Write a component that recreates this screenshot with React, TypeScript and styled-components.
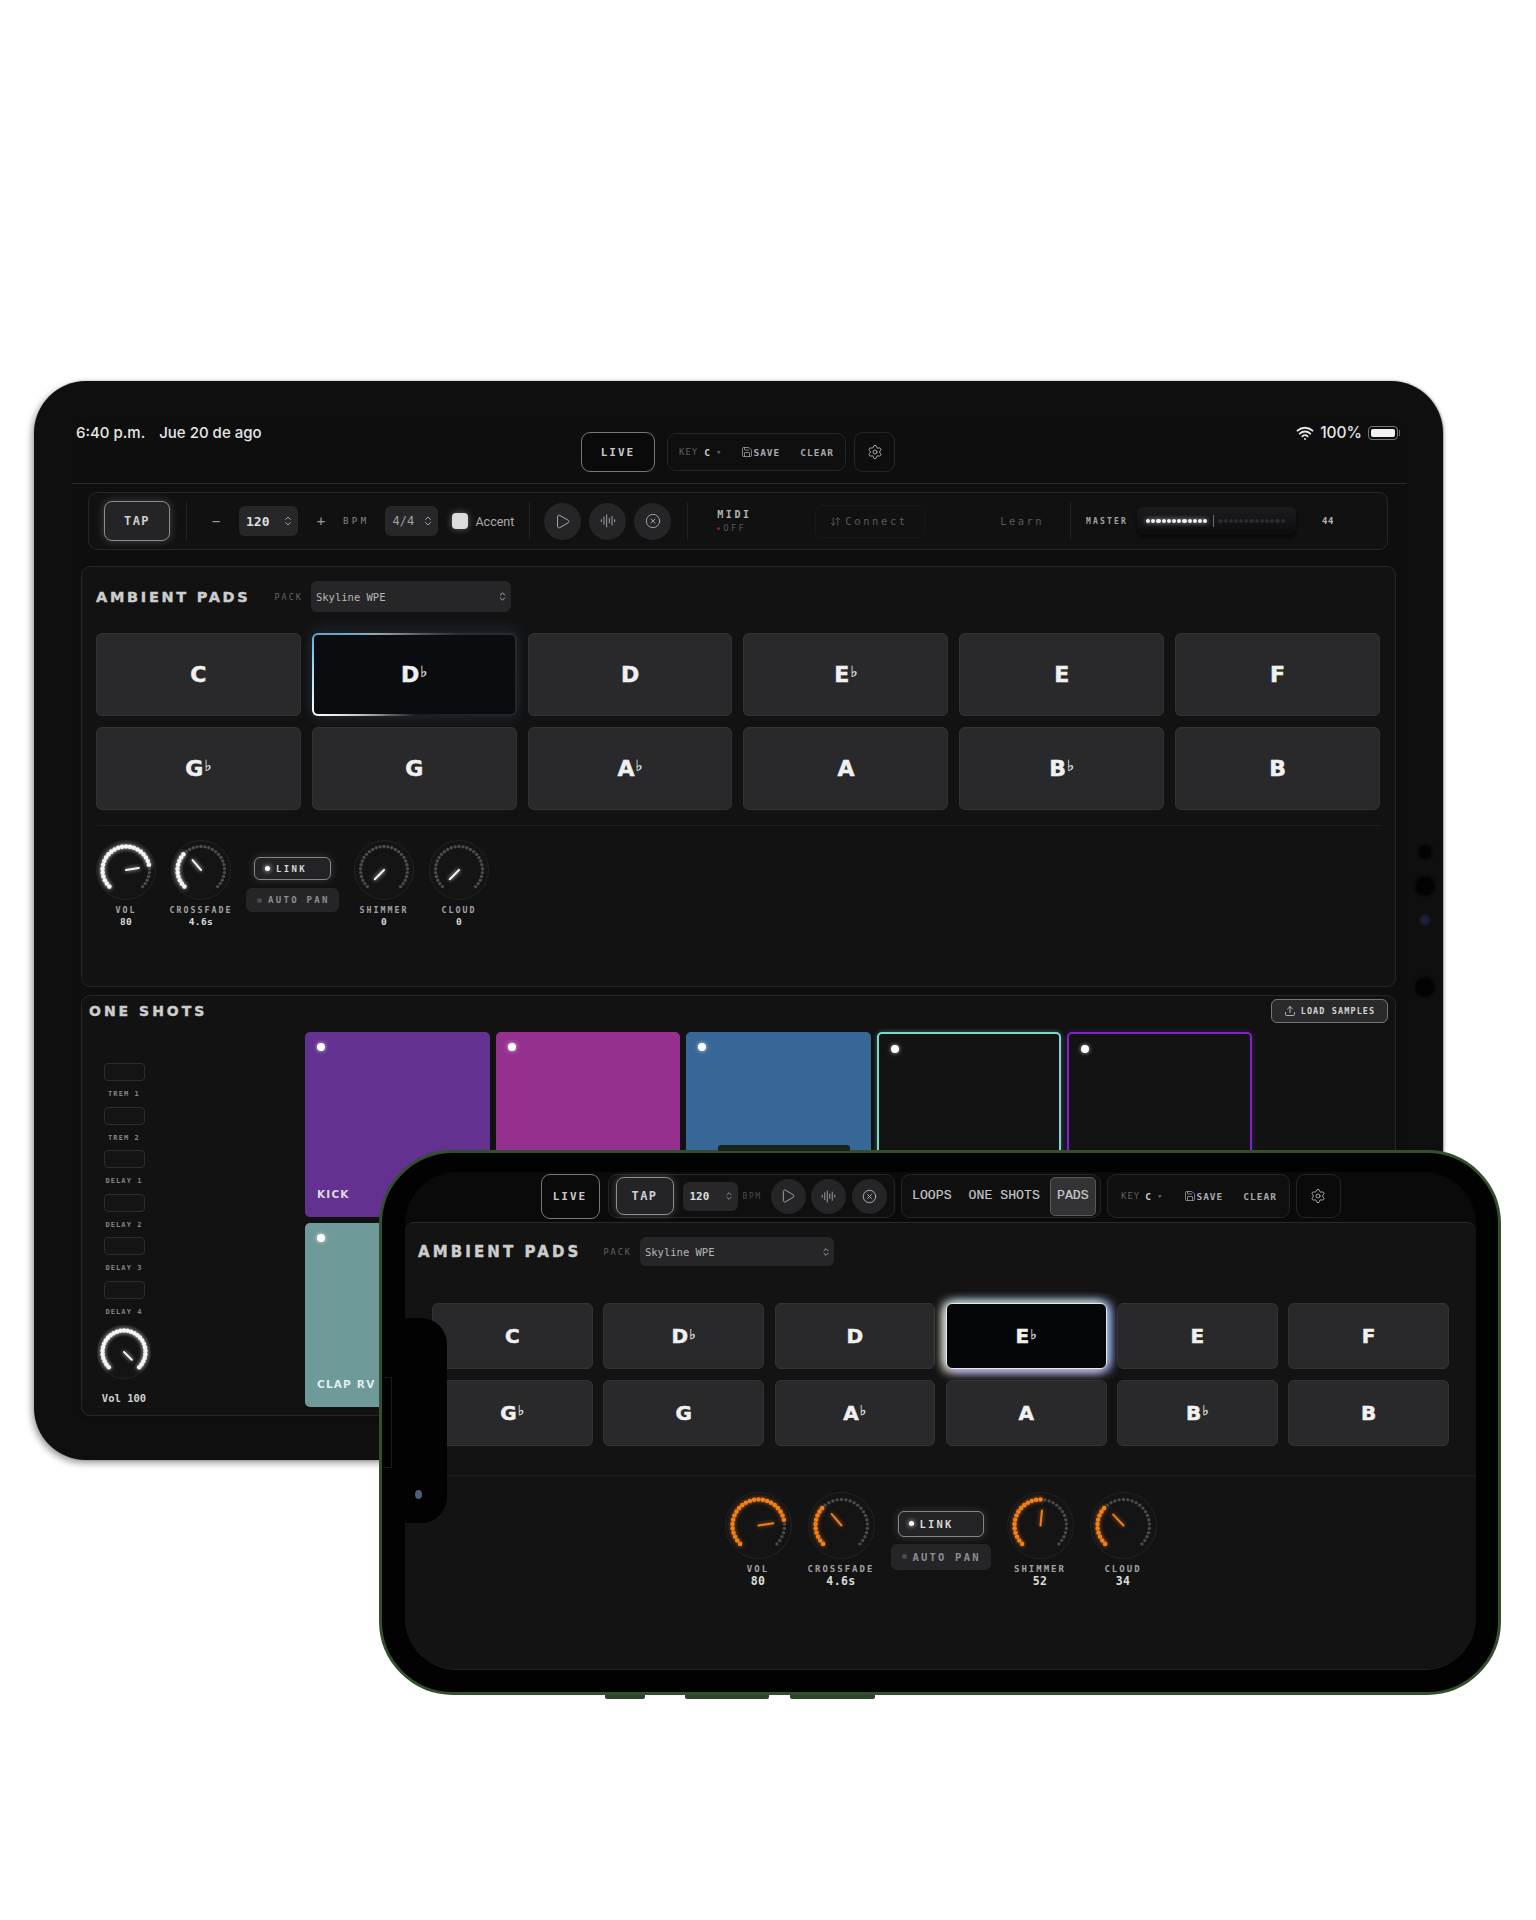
import React from 'react';
import styled, { createGlobalStyle, css } from 'styled-components';
import {
  Play,
  AudioLines,
  CircleX,
  Settings,
  Save,
  ChevronsUpDown,
  Upload,
  ArrowDownUp,
  Wifi,
} from 'lucide-react';

const MONO = `'DejaVu Sans Mono', 'Liberation Mono', monospace`;
const HEAVY = `'DejaVu Sans', 'Liberation Sans', sans-serif`;

const GlobalStyle = createGlobalStyle`
  html, body {
    margin: 0;
    padding: 0;
    background: #fff;
  }
  * {
    box-sizing: border-box;
  }
`;

const inset = css<{ $ml?: number }>`
  margin-left: ${(p) => p.$ml ?? 0}px;
  flex: none;
`;

const Canvas = styled.div`
  position: relative;
  width: 1536px;
  height: 1920px;
  overflow: hidden;
  background: #fff;
`;

/* ---------- devices ---------- */

const Tablet = styled.div`
  position: absolute;
  left: 34px;
  top: 381px;
  width: 1409px;
  height: 1079px;
  padding: 37px 36px 37px 38px;
  border-radius: 52px;
  background: #0f0f10;
  box-shadow: -2px 3px 7px rgba(0, 0, 0, 0.4), 1px 0 2px rgba(0, 0, 0, 0.3);
`;

const TabletScreen = styled.div`
  height: 100%;
  border-radius: 22px 22px 26px 26px;
  background: #0e0e0f;
  display: flex;
  flex-direction: column;
`;

const Sensor = styled.span<{ $top: number; $size: number; $blue?: boolean }>`
  position: absolute;
  right: ${(p) => 18 - p.$size / 2}px;
  top: ${(p) => p.$top}px;
  width: ${(p) => p.$size}px;
  height: ${(p) => p.$size}px;
  border-radius: 50%;
  background: ${(p) => (p.$blue ? '#1c2238' : '#030303')};
  filter: blur(1px);
`;

const Phone = styled.div`
  position: absolute;
  left: 379px;
  top: 1150px;
  width: 1122px;
  height: 545px;
  padding: 19px 22px 22px 23px;
  border: 3.5px solid #344f2e;
  border-radius: 74px;
  background: #020202;
`;

const PhoneScreen = styled.div`
  height: 100%;
  border-radius: 52px;
  overflow: hidden;
  background: #0a0a0b;
  border-bottom: 1px solid #232324;
  display: flex;
  flex-direction: column;
`;

const Notch = styled.div`
  position: absolute;
  left: 0;
  top: 165px;
  width: 65px;
  height: 205px;
  border-radius: 0 26px 26px 0;
  background: #020202;
`;

const CameraDot = styled.span`
  position: absolute;
  left: 33px;
  top: 337px;
  width: 7px;
  height: 9px;
  border-radius: 50%;
  background: #4d5f70;
`;

const SideButtonOutline = styled.span`
  position: absolute;
  left: 2px;
  top: 224px;
  width: 8px;
  height: 91px;
  border: 1px solid #1c1c1c;
  border-left: none;
`;

const PowerButton = styled.span`
  position: absolute;
  left: 336px;
  top: -8px;
  width: 132px;
  height: 6px;
  border-radius: 3px 3px 0 0;
  background: #16241a;
`;

const BottomButton = styled.span<{ $left: number; $width: number }>`
  position: absolute;
  left: ${(p) => p.$left}px;
  bottom: -7px;
  width: ${(p) => p.$width}px;
  height: 4px;
  border-radius: 0 0 2px 2px;
  background: #2c4429;
`;

/* ---------- tablet header ---------- */

const StatusHeader = styled.div`
  display: grid;
  grid-template-columns: 509px auto 1fr;
  height: 66px;
  padding-top: 6px;
  border-bottom: 1px solid #2c2c2d;
`;

const StatusLeft = styled.div`
  display: flex;
  gap: 14px;
  padding-left: 4px;
  font: 500 15px/18px Inter, 'Liberation Sans', sans-serif;
  color: #e6e6e6;
`;

const StatusRight = styled.div`
  display: flex;
  justify-content: flex-end;
  align-items: center;
  gap: 6px;
  height: 18px;
  padding-right: 9px;
  font: 500 15.5px/18px Inter, 'Liberation Sans', sans-serif;
  color: #e6e6e6;
`;

const Battery = styled.span`
  display: inline-block;
  position: relative;
  width: 30px;
  height: 14px;
  padding: 2px;
  border: 1px solid #777;
  border-radius: 4px;
  &::before {
    content: '';
    display: block;
    height: 100%;
    border-radius: 2px;
    background: #f2f2f2;
  }
  &::after {
    content: '';
    position: absolute;
    right: -3px;
    top: 3px;
    width: 1.5px;
    height: 6px;
    background: #666;
  }
`;

const HeaderTools = styled.div`
  display: flex;
  align-items: center;
  height: 40px;
  margin-top: 8px;
`;

const LiveButton = styled.div<{ $w: number; $h: number; $ml?: number }>`
  ${inset};
  width: ${(p) => p.$w}px;
  height: ${(p) => p.$h}px;
  display: flex;
  align-items: center;
  justify-content: center;
  border: 1.5px solid #77777a;
  border-radius: 9px;
  background: #0a0a0b;
  font: 700 11px ${MONO};
  letter-spacing: 2px;
  color: #c9c9c9;
`;

const ToolGroup = styled.div<{ $w: number; $h: number; $ml?: number; $pad?: number }>`
  ${inset};
  width: ${(p) => p.$w}px;
  height: ${(p) => p.$h}px;
  padding-left: ${(p) => p.$pad ?? 0}px;
  display: flex;
  align-items: center;
  border: 1px solid #252527;
  border-radius: 9px;
  background: #0f0f10;
`;

const KeyLabel = styled.span<{ $ml?: number }>`
  ${inset};
  font: 400 9px ${MONO};
  letter-spacing: 1px;
  color: #5f5f62;
`;

const KeyValue = styled.span<{ $ml?: number }>`
  ${inset};
  font: 700 9.5px ${MONO};
  color: #cfcfcf;
`;

const ToolAction = styled.span<{ $ml?: number }>`
  ${inset};
  display: inline-flex;
  align-items: center;
  font: 700 9.5px ${MONO};
  letter-spacing: 1px;
  color: #a9a9ab;
`;

const GearButton = styled.div<{ $w: number; $h: number; $ml?: number }>`
  ${inset};
  width: ${(p) => p.$w}px;
  height: ${(p) => p.$h}px;
  display: flex;
  align-items: center;
  justify-content: center;
  border: 1px solid #252527;
  border-radius: 9px;
  color: #a8a8a8;
`;

/* ---------- transport toolbar ---------- */

const Toolbar = styled.div`
  display: flex;
  align-items: center;
  height: 58px;
  margin: 8px 19px 0 16px;
  padding-left: 15px;
  border: 1px solid #262628;
  border-radius: 9px;
  background: #111112;
`;

const TapButton = styled.div<{ $w: number; $h: number; $ml?: number }>`
  ${inset};
  width: ${(p) => p.$w}px;
  height: ${(p) => p.$h}px;
  display: flex;
  align-items: center;
  justify-content: center;
  border: 1.5px solid #8c8c8e;
  border-radius: 8px;
  background: #242426;
  box-shadow: 0 0 8px rgba(255, 255, 255, 0.22);
  font: 700 12px ${MONO};
  letter-spacing: 1.4px;
  color: #d0d0d0;
`;

const VRule = styled.span<{ $ml?: number }>`
  ${inset};
  width: 1px;
  height: 38px;
  background: #202022;
`;

const StepSign = styled.span<{ $ml?: number }>`
  ${inset};
  width: 12px;
  text-align: center;
  font: 400 14px ${MONO};
  color: #9c9c9c;
`;

const ValueBox = styled.div<{ $w: number; $h: number; $ml?: number; $bold?: boolean; $size?: number }>`
  ${inset};
  width: ${(p) => p.$w}px;
  height: ${(p) => p.$h}px;
  padding: 0 4px 0 7px;
  display: flex;
  align-items: center;
  justify-content: space-between;
  border-radius: 6px;
  background: #272729;
  font: ${(p) => (p.$bold ? 700 : 400)} ${(p) => p.$size ?? 12}px ${MONO};
  color: ${(p) => (p.$bold ? '#dedede' : '#a0a0a0')};
  svg {
    flex: none;
    color: #a0a0a0;
  }
`;

const BpmLabel = styled.span<{ $ml?: number; $dim?: boolean; $ls: number; $size: number }>`
  ${inset};
  font: 400 ${(p) => p.$size}px ${MONO};
  letter-spacing: ${(p) => p.$ls}px;
  color: ${(p) => (p.$dim ? '#4a4a4c' : '#858587')};
`;

const AccentBox = styled.span<{ $ml?: number }>`
  ${inset};
  width: 16px;
  height: 16px;
  border-radius: 4px;
  background: #dcdcdc;
  box-shadow: 0 0 7px rgba(255, 255, 255, 0.35);
`;

const AccentLabel = styled.span<{ $ml?: number }>`
  ${inset};
  font: 400 12.5px Roboto, 'Liberation Sans', sans-serif;
  color: #ababab;
`;

const RoundRow = styled.div<{ $gap: number; $ml?: number }>`
  ${inset};
  display: flex;
  gap: ${(p) => p.$gap}px;
`;

const RoundButton = styled.div<{ $d: number }>`
  width: ${(p) => p.$d}px;
  height: ${(p) => p.$d}px;
  display: flex;
  align-items: center;
  justify-content: center;
  border-radius: 50%;
  background: #252527;
  color: #a9a9a9;
`;

const MidiBlock = styled.div<{ $ml?: number }>`
  ${inset};
  width: 34px;
  display: flex;
  flex-direction: column;
  gap: 3px;
`;

const MidiTitle = styled.span`
  font: 700 10px/11px ${MONO};
  letter-spacing: 2.5px;
  color: #b4b4b4;
`;

const MidiState = styled.span`
  display: flex;
  align-items: center;
  gap: 3px;
  font: 400 9px/10px ${MONO};
  letter-spacing: 2.2px;
  color: #57575a;
  &::before {
    content: '';
    width: 3px;
    height: 3px;
    border-radius: 50%;
    background: #6e2a26;
  }
`;

const ConnectBox = styled.div<{ $ml?: number }>`
  ${inset};
  width: 110px;
  height: 33px;
  display: flex;
  align-items: center;
  gap: 4px;
  padding-left: 14px;
  border: 1px solid #18181a;
  border-radius: 7px;
  font: 400 10.5px ${MONO};
  letter-spacing: 2.6px;
  color: #5a5a5c;
`;

const LearnLabel = styled.span<{ $ml?: number }>`
  ${inset};
  font: 400 10.5px ${MONO};
  letter-spacing: 2.4px;
  color: #59595b;
`;

const MasterLabel = styled.span<{ $ml?: number }>`
  ${inset};
  font: 700 8px ${MONO};
  letter-spacing: 2.2px;
  color: #a4a4a4;
`;

const Meter = styled.div<{ $ml?: number }>`
  ${inset};
  width: 159px;
  height: 28px;
  padding-left: 9px;
  display: flex;
  align-items: center;
  gap: 1px;
  border-radius: 6px;
  background: linear-gradient(#1c1c1f, #0c0c0e);
  box-shadow: 0 2px 3px rgba(0, 0, 0, 0.6);
`;

const MeterDot = styled.span<{ $on?: boolean }>`
  width: 4.2px;
  height: 4.2px;
  flex: none;
  border-radius: 50%;
  background: ${(p) => (p.$on ? '#f2f2f2' : '#2c2c2e')};
  box-shadow: ${(p) => (p.$on ? '0 0 5px rgba(255,255,255,.75)' : 'none')};
`;

const MeterTick = styled.span`
  width: 1px;
  height: 12px;
  flex: none;
  margin: 0 3px 0 5px;
  background: #6c6c6e;
`;

const MasterValue = styled.span<{ $ml?: number }>`
  ${inset};
  font: 700 9px ${MONO};
  letter-spacing: 0.6px;
  color: #b5b5b5;
`;

/* ---------- panels ---------- */

const TabletPanel = styled.section<{ $mt: number }>`
  position: relative;
  height: 421px;
  margin: ${(p) => p.$mt}px 11px 0 9px;
  border: 1px solid #262628;
  border-radius: 9px;
  background: #121213;
`;

const TitleRow = styled.div<{ $top: number; $left: number }>`
  display: flex;
  align-items: center;
  padding: ${(p) => p.$top}px 0 0 ${(p) => p.$left}px;
`;

const PanelTitle = styled.h2<{ $size: number; $ls: number }>`
  margin: 0;
  font: 700 ${(p) => p.$size}px ${HEAVY};
  letter-spacing: ${(p) => p.$ls}px;
  white-space: nowrap;
  color: #cdcdcd;
  -webkit-text-stroke: 0.4px #cdcdcd;
`;

const PackLabel = styled.span<{ $ml?: number; $size: number }>`
  ${inset};
  font: 400 ${(p) => p.$size}px ${MONO};
  letter-spacing: 2px;
  color: #626265;
`;

const PackSelect = styled.div<{ $w: number; $h: number; $ml?: number }>`
  ${inset};
  width: ${(p) => p.$w}px;
  height: ${(p) => p.$h}px;
  padding: 0 3px 0 5px;
  display: flex;
  align-items: center;
  justify-content: space-between;
  border-radius: 6px;
  background: #262628;
  font: 400 10.5px ${MONO};
  color: #b6b6b6;
`;

const KeyGrid = styled.div<{ $rowH: number; $gap: number; $mt: number; $ml: number; $mr: number }>`
  display: grid;
  grid-template-columns: repeat(6, 1fr);
  grid-auto-rows: ${(p) => p.$rowH}px;
  gap: ${(p) => p.$gap}px;
  margin: ${(p) => p.$mt}px ${(p) => p.$mr}px 0 ${(p) => p.$ml}px;
`;

const KeyPad = styled.div<{ $size: number }>`
  display: flex;
  align-items: center;
  justify-content: center;
  border: 1px solid #333335;
  border-radius: 6px;
  background: #29292b;
  font: 700 ${(p) => p.$size}px ${HEAVY};
  color: #f0f0f0;
  -webkit-text-stroke: 0.5px #f0f0f0;
`;

const TabletActivePad = styled(KeyPad)`
  border: 2px solid transparent;
  background:
    linear-gradient(#0a0c10, #0a0c10) padding-box,
    conic-gradient(from 180deg, #1a1c20 0deg, #666 32deg, #fff 68deg, #8fcdf0 100deg, #5da6d4 112deg, #9aa6ae 135deg, #666 180deg, #2a2c30 230deg, #1a1c20 360deg) border-box;
  box-shadow: 0 -5px 14px rgba(120, 170, 210, 0.12), 0 5px 12px rgba(120, 170, 210, 0.1);
`;

const PhoneActivePad = styled(KeyPad)`
  border: 1px solid #e8e8ee;
  background: #050608;
  box-shadow:
    -4px -3px 9px rgba(214, 232, 214, 0.7),
    4px -3px 9px rgba(150, 190, 240, 0.75),
    4px 4px 9px rgba(165, 160, 240, 0.75),
    -4px 4px 9px rgba(240, 222, 208, 0.75);
`;

const Flat = styled.sup<{ $size: number }>`
  font: 700 ${(p) => p.$size}px ${HEAVY};
  line-height: 0;
  vertical-align: ${(p) => p.$size * 0.32}px;
  margin-left: 1px;
  -webkit-text-stroke: 0.2px #f0f0f0;
`;

const Rule = styled.div<{ $mt: number; $mx: number }>`
  height: 1px;
  margin: ${(p) => p.$mt}px ${(p) => p.$mx}px 0;
  background: #1e1e20;
`;

const ControlRow = styled.div<{ $mt: number; $gap: number; $pl?: number; $center?: boolean }>`
  display: flex;
  gap: ${(p) => p.$gap}px;
  margin-top: ${(p) => p.$mt}px;
  padding-left: ${(p) => p.$pl ?? 0}px;
  justify-content: ${(p) => (p.$center ? 'center' : 'flex-start')};
`;

const KnobCell = styled.div<{ $w: number }>`
  width: ${(p) => p.$w}px;
  display: flex;
  flex-direction: column;
  align-items: center;
  flex: none;
`;

const KnobLabel = styled.span<{ $mt: number; $size: number; $ls: number }>`
  margin-top: ${(p) => p.$mt}px;
  font: 700 ${(p) => p.$size}px/12px ${MONO};
  letter-spacing: ${(p) => p.$ls}px;
  white-space: nowrap;
  color: #a2a2a4;
`;

const KnobValue = styled.span<{ $size: number }>`
  font: 700 ${(p) => p.$size}px/12px ${MONO};
  letter-spacing: 0.4px;
  color: #dcdcdc;
`;

const ToggleStack = styled.div<{ $w: number; $pt: number; $gap: number }>`
  width: ${(p) => p.$w}px;
  flex: none;
  padding-top: ${(p) => p.$pt}px;
  display: flex;
  flex-direction: column;
  align-items: center;
  gap: ${(p) => p.$gap}px;
`;

const Toggle = styled.div<{ $w: number; $h: number; $on?: boolean; $size: number; $ls: number }>`
  width: ${(p) => p.$w}px;
  height: ${(p) => p.$h}px;
  padding-left: 10px;
  display: flex;
  align-items: center;
  gap: 6px;
  border-radius: 6px;
  border: 1.5px solid ${(p) => (p.$on ? '#858587' : '#262628')};
  background: ${(p) => (p.$on ? '#232325' : '#252527')};
  box-shadow: ${(p) => (p.$on ? '0 0 9px rgba(255,255,255,.16)' : 'none')};
  font: 700 ${(p) => p.$size}px ${MONO};
  letter-spacing: ${(p) => p.$ls}px;
  white-space: nowrap;
  color: ${(p) => (p.$on ? '#d6d6d6' : '#8d8d8f')};
`;

const ToggleLed = styled.span<{ $on?: boolean }>`
  width: 5px;
  height: 5px;
  flex: none;
  border-radius: 50%;
  background: ${(p) => (p.$on ? '#fff' : '#4a4a4c')};
  box-shadow: ${(p) => (p.$on ? '0 0 5px #fff' : 'none')};
`;

const LitDot = styled.circle<{ $glow: string }>`
  filter: drop-shadow(0 0 2px ${(p) => p.$glow});
`;

const NeedleLine = styled.line<{ $glow: string }>`
  filter: drop-shadow(0 0 2px ${(p) => p.$glow});
`;

/* ---------- one shots ---------- */

const ShotsHeader = styled.div`
  display: flex;
  justify-content: space-between;
  align-items: center;
  height: 24px;
  margin-top: 3px;
  padding: 0 7px;
`;

const LoadButton = styled.div`
  width: 117px;
  height: 24px;
  display: flex;
  align-items: center;
  justify-content: center;
  gap: 5px;
  border: 1px solid #77777a;
  border-radius: 6px;
  background: #2a2a2c;
  font: 700 8.5px ${MONO};
  letter-spacing: 1.1px;
  color: #d4d4d4;
`;

const ShotsBody = styled.div`
  display: flex;
  margin-top: 9px;
  padding-left: 12px;
`;

const SendColumn = styled.div`
  width: 60px;
  flex: none;
  padding-top: 31px;
  display: flex;
  flex-direction: column;
  align-items: center;
`;

const SendItem = styled.div`
  height: 43.6px;
  display: flex;
  flex-direction: column;
  align-items: center;
`;

const SendSwitch = styled.span`
  width: 41px;
  height: 18px;
  border: 1px solid #2c2c2e;
  border-radius: 4px;
  background: #141415;
`;

const SendLabel = styled.span`
  margin-top: 8px;
  font: 700 7px/10px ${MONO};
  letter-spacing: 1.1px;
  white-space: nowrap;
  color: #858587;
`;

const VolCaption = styled.span`
  margin-top: 13px;
  font: 700 10.5px/12px ${MONO};
  color: #cfcfcf;
`;

const ShotGrid = styled.div`
  display: grid;
  grid-template-columns: repeat(5, 184.5px);
  grid-auto-rows: 184.5px;
  gap: 6px;
  margin-left: 151px;
`;

const ShotPad = styled.div<{ $fill: string; $ring?: string }>`
  display: flex;
  flex-direction: column;
  justify-content: space-between;
  padding: 11px 12px 17px 12px;
  border-radius: 5px;
  background: ${(p) => p.$fill};
  border: ${(p) => (p.$ring ? `2px solid ${p.$ring}` : 'none')};
  box-shadow: ${(p) => (p.$ring ? `0 0 5px ${p.$ring}66` : 'none')};
`;

const ShotLed = styled.span`
  width: 8px;
  height: 8px;
  border-radius: 50%;
  background: #fff;
  box-shadow: 0 0 4px rgba(255, 255, 255, 0.7);
`;

const ShotName = styled.span`
  font: 700 10.5px/12px ${HEAVY};
  letter-spacing: 1.2px;
  white-space: nowrap;
  color: rgba(255, 255, 255, 0.82);
`;

/* ---------- phone ---------- */

const PhoneHeader = styled.div`
  height: 50px;
  flex: none;
  display: flex;
  align-items: flex-start;
  padding: 2px 0 0 135.5px;
`;

const TabRow = styled.div<{ $ml?: number }>`
  ${inset};
  width: 200px;
  height: 44px;
  padding-left: 10px;
  display: flex;
  align-items: center;
  border: 1px solid #252527;
  border-radius: 9px;
  background: #0f0f10;
`;

const TabText = styled.span<{ $ml?: number }>`
  ${inset};
  font: 400 13.2px/16px 'Liberation Mono', monospace;
  color: #c4c4c4;
  -webkit-text-stroke: 0.2px #c4c4c4;
`;

const TabActive = styled(TabText)`
  width: 46px;
  height: 39px;
  display: flex;
  align-items: center;
  justify-content: center;
  border: 1px solid #59595b;
  border-radius: 5px;
  background: #333335;
  color: #cfcfcf;
`;

const PhonePanel = styled.section`
  flex: 1;
  border-top: 1px solid #2a2a2c;
  border-radius: 9px 9px 0 0;
  background: #131314;
`;

type KnobProps = {
  size: number;
  ringR: number;
  needle: number;
  value: number;
  lit: string;
  off: string;
  glow: string;
};

const DOT_COUNT = 29;

function Knob({ size, ringR, needle, value, lit, off, glow }: KnobProps) {
  const c = size / 2;
  const toPoint = (deg: number, r: number) => {
    const rad = (deg * Math.PI) / 180;
    return { x: c + Math.sin(rad) * r, y: c - Math.cos(rad) * r };
  };
  const tip = toPoint(-135 + 270 * value, needle);
  return (
    <svg width={size} height={size} viewBox={`0 0 ${size} ${size}`}>
      <circle cx={c} cy={c} r={c - 0.5} fill="#141415" stroke="#232325" />
      {Array.from({ length: DOT_COUNT }, (_, i) => {
        const frac = i / (DOT_COUNT - 1);
        const p = toPoint(-135 + 270 * frac, ringR);
        const on = value > 0 && frac <= value;
        return on ? (
          <LitDot key={i} cx={p.x} cy={p.y} r={2.3} fill={lit} $glow={glow} />
        ) : (
          <circle key={i} cx={p.x} cy={p.y} r={1.7} fill={off} />
        );
      })}
      <NeedleLine x1={c} y1={c} x2={tip.x} y2={tip.y} stroke={lit} strokeWidth={2} strokeLinecap="round" $glow={glow} />
    </svg>
  );
}

const WHITE_KNOB = { lit: '#f4f4f4', off: '#4c4c4e', glow: 'rgba(255,255,255,.8)' };
const ORANGE_KNOB = { lit: '#f0811c', off: '#4a4a4c', glow: 'rgba(240,120,20,.7)' };

const NOTE_ROWS: [string, boolean][][] = [
  [['C', false], ['D', true], ['D', false], ['E', true], ['E', false], ['F', false]],
  [['G', true], ['G', false], ['A', true], ['A', false], ['B', true], ['B', false]],
];

function NoteContent({ note, flat, flatSize }: { note: string; flat: boolean; flatSize: number }) {
  return (
    <span>
      {note}
      {flat && <Flat $size={flatSize}>♭</Flat>}
    </span>
  );
}

function TabletKeys() {
  return (
    <KeyGrid $rowH={83} $gap={11} $mt={21} $ml={14} $mr={15}>
      {NOTE_ROWS.flat().map(([note, flat], i) => {
        const Pad = i === 1 ? TabletActivePad : KeyPad;
        return (
          <Pad key={i} $size={22}>
            <NoteContent note={note} flat={flat} flatSize={15} />
          </Pad>
        );
      })}
    </KeyGrid>
  );
}

function PhoneKeys() {
  return (
    <KeyGrid $rowH={66} $gap={10.5} $mt={37} $ml={27} $mr={27}>
      {NOTE_ROWS.flat().map(([note, flat], i) => {
        const Pad = i === 3 ? PhoneActivePad : KeyPad;
        return (
          <Pad key={i} $size={20}>
            <NoteContent note={note} flat={flat} flatSize={14} />
          </Pad>
        );
      })}
    </KeyGrid>
  );
}

const SENDS = ['TREM 1', 'TREM 2', 'DELAY 1', 'DELAY 2', 'DELAY 3', 'DELAY 4'];

function TabletKnob({ label, shown, value }: { label: string; shown: string; value: number }) {
  return (
    <KnobCell $w={60}>
      <Knob size={60} ringR={23.5} needle={13} value={value} {...WHITE_KNOB} />
      <KnobLabel $mt={4} $size={8.3} $ls={2} >{label}</KnobLabel>
      <KnobValue $size={9.5}>{shown}</KnobValue>
    </KnobCell>
  );
}

function PhoneKnob({ label, shown, value }: { label: string; shown: string; value: number }) {
  return (
    <KnobCell $w={67}>
      <Knob size={67} ringR={26} needle={15} value={value} {...ORANGE_KNOB} />
      <KnobLabel $mt={4} $size={9} $ls={2}>{label}</KnobLabel>
      <KnobValue $size={11.5}>{shown}</KnobValue>
    </KnobCell>
  );
}

export default function App() {
  return (
    <Canvas>
      <GlobalStyle />

      <Tablet>
        <TabletScreen>
          <StatusHeader>
            <StatusLeft>
              <span>6:40 p.m.</span>
              <span>Jue 20 de ago</span>
            </StatusLeft>
            <HeaderTools>
              <LiveButton $w={74} $h={40}>LIVE</LiveButton>
              <ToolGroup $w={179} $h={38} $ml={12} $pad={11}>
                <KeyLabel>KEY</KeyLabel>
                <KeyValue $ml={6}>C</KeyValue>
                <KeyLabel $ml={6}>▾</KeyLabel>
                <ToolAction $ml={19}>
                  <Save size={12} strokeWidth={1.5} />SAVE
                </ToolAction>
                <ToolAction $ml={20}>CLEAR</ToolAction>
              </ToolGroup>
              <GearButton $w={41} $h={40} $ml={8}>
                <Settings size={16} strokeWidth={1.5} />
              </GearButton>
            </HeaderTools>
            <StatusRight>
              <Wifi size={18} strokeWidth={2.6} />
              <span>100%</span>
              <Battery />
            </StatusRight>
          </StatusHeader>

          <Toolbar>
            <TapButton $w={66} $h={40}>TAP</TapButton>
            <VRule $ml={16} />
            <StepSign $ml={23}>−</StepSign>
            <ValueBox $w={59} $h={30} $ml={17} $bold $size={13}>
              120
              <ChevronsUpDown size={12} />
            </ValueBox>
            <StepSign $ml={17}>+</StepSign>
            <BpmLabel $ml={16} $ls={3.4} $size={9}>BPM</BpmLabel>
            <ValueBox $w={53} $h={30} $ml={16}>
              4/4
              <ChevronsUpDown size={12} />
            </ValueBox>
            <AccentBox $ml={14} />
            <AccentLabel $ml={7}>Accent</AccentLabel>
            <VRule $ml={15} />
            <RoundRow $gap={8} $ml={14}>
              <RoundButton $d={37}><Play size={17} strokeWidth={1.4} /></RoundButton>
              <RoundButton $d={37}><AudioLines size={16} strokeWidth={1.4} /></RoundButton>
              <RoundButton $d={37}><CircleX size={16} strokeWidth={1.4} /></RoundButton>
            </RoundRow>
            <VRule $ml={16} />
            <MidiBlock $ml={29}>
              <MidiTitle>MIDI</MidiTitle>
              <MidiState>OFF</MidiState>
            </MidiBlock>
            <ConnectBox $ml={64}>
              <ArrowDownUp size={11} />
              Connect
            </ConnectBox>
            <LearnLabel $ml={75}>Learn</LearnLabel>
            <VRule $ml={26} />
            <MasterLabel $ml={15}>MASTER</MasterLabel>
            <Meter $ml={9}>
              {Array.from({ length: 12 }, (_, i) => <MeterDot key={i} $on />)}
              <MeterTick />
              {Array.from({ length: 13 }, (_, i) => <MeterDot key={i} />)}
            </Meter>
            <MasterValue $ml={26}>44</MasterValue>
          </Toolbar>

          <TabletPanel $mt={16}>
            <TitleRow $top={14} $left={14}>
              <PanelTitle $size={14.5} $ls={2.7}>AMBIENT PADS</PanelTitle>
              <PackLabel $ml={24} $size={8.5}>PACK</PackLabel>
              <PackSelect $w={200} $h={31} $ml={8}>
                Skyline WPE
                <ChevronsUpDown size={11} />
              </PackSelect>
            </TitleRow>
            <TabletKeys />
            <Rule $mt={15} $mx={15} />
            <ControlRow $mt={14} $gap={15} $pl={14}>
              <TabletKnob label="VOL" shown="80" value={0.8} />
              <TabletKnob label="CROSSFADE" shown="4.6s" value={0.35} />
              <ToggleStack $w={93} $pt={17} $gap={8}>
                <Toggle $w={77} $h={23} $on $size={9} $ls={2.3}>
                  <ToggleLed $on />LINK
                </Toggle>
                <Toggle $w={93} $h={24} $size={9} $ls={2.3}>
                  <ToggleLed />AUTO PAN
                </Toggle>
              </ToggleStack>
              <TabletKnob label="SHIMMER" shown="0" value={0} />
              <TabletKnob label="CLOUD" shown="0" value={0} />
            </ControlRow>
          </TabletPanel>

          <TabletPanel $mt={8}>
            <ShotsHeader>
              <PanelTitle $size={14} $ls={3}>ONE SHOTS</PanelTitle>
              <LoadButton>
                <Upload size={12} strokeWidth={1.6} />
                LOAD SAMPLES
              </LoadButton>
            </ShotsHeader>
            <ShotsBody>
              <SendColumn>
                {SENDS.map((name) => (
                  <SendItem key={name}>
                    <SendSwitch />
                    <SendLabel>{name}</SendLabel>
                  </SendItem>
                ))}
                <Knob size={54} ringR={21.5} needle={11} value={1} {...WHITE_KNOB} />
                <VolCaption>Vol 100</VolCaption>
              </SendColumn>
              <ShotGrid>
                <ShotPad $fill="#63318f"><ShotLed /><ShotName>KICK</ShotName></ShotPad>
                <ShotPad $fill="#96308f"><ShotLed /></ShotPad>
                <ShotPad $fill="#366796"><ShotLed /></ShotPad>
                <ShotPad $fill="#131314" $ring="#7fd6cf"><ShotLed /></ShotPad>
                <ShotPad $fill="#131314" $ring="#7a24c9"><ShotLed /></ShotPad>
                <ShotPad $fill="#6f9a9a"><ShotLed /><ShotName>CLAP RV</ShotName></ShotPad>
              </ShotGrid>
            </ShotsBody>
          </TabletPanel>
        </TabletScreen>
        <Sensor $top={464} $size={14} />
        <Sensor $top={495} $size={20} />
        <Sensor $top={534} $size={10} $blue />
        <Sensor $top={596} $size={20} />
      </Tablet>

      <Phone>
        <PowerButton />
        <BottomButton $left={223} $width={40} />
        <BottomButton $left={303} $width={84} />
        <BottomButton $left={408} $width={85} />
        <PhoneScreen>
          <PhoneHeader>
            <LiveButton $w={59} $h={45}>LIVE</LiveButton>
            <ToolGroup $w={287} $h={44} $ml={8} $pad={7}>
              <TapButton $w={58} $h={38}>TAP</TapButton>
              <ValueBox $w={55} $h={29} $ml={9} $bold $size={11}>
                120
                <ChevronsUpDown size={10} />
              </ValueBox>
              <BpmLabel $ml={5} $dim $ls={1.6} $size={8}>BPM</BpmLabel>
              <RoundRow $gap={5.5} $ml={9}>
                <RoundButton $d={35}><Play size={16} strokeWidth={1.4} /></RoundButton>
                <RoundButton $d={35}><AudioLines size={15} strokeWidth={1.4} /></RoundButton>
                <RoundButton $d={35}><CircleX size={15} strokeWidth={1.6} /></RoundButton>
              </RoundRow>
            </ToolGroup>
            <TabRow $ml={6.5}>
              <TabText>LOOPS</TabText>
              <TabText $ml={17}>ONE SHOTS</TabText>
              <TabActive $ml={10}>PADS</TabActive>
            </TabRow>
            <ToolGroup $w={183} $h={44} $ml={6} $pad={13}>
              <KeyLabel>KEY</KeyLabel>
              <KeyValue $ml={5}>C</KeyValue>
              <KeyLabel $ml={6}>▾</KeyLabel>
              <ToolAction $ml={21}>
                <Save size={12} strokeWidth={1.5} />SAVE
              </ToolAction>
              <ToolAction $ml={20}>CLEAR</ToolAction>
            </ToolGroup>
            <GearButton $w={45} $h={44} $ml={5.5}>
              <Settings size={16} strokeWidth={1.5} />
            </GearButton>
          </PhoneHeader>

          <PhonePanel>
            <TitleRow $top={14} $left={13}>
              <PanelTitle $size={15} $ls={3.1}>AMBIENT PADS</PanelTitle>
              <PackLabel $ml={22} $size={8.5}>PACK</PackLabel>
              <PackSelect $w={194} $h={29} $ml={8}>
                Skyline WPE
                <ChevronsUpDown size={10} />
              </PackSelect>
            </TitleRow>
            <PhoneKeys />
            <Rule $mt={29} $mx={0} />
            <ControlRow $mt={16} $gap={16} $center>
              <PhoneKnob label="VOL" shown="80" value={0.8} />
              <PhoneKnob label="CROSSFADE" shown="4.6s" value={0.35} />
              <ToggleStack $w={100} $pt={19} $gap={7}>
                <Toggle $w={86} $h={26} $on $size={10.5} $ls={2.2}>
                  <ToggleLed $on />LINK
                </Toggle>
                <Toggle $w={100} $h={26} $size={10.5} $ls={2.2}>
                  <ToggleLed />AUTO PAN
                </Toggle>
              </ToggleStack>
              <PhoneKnob label="SHIMMER" shown="52" value={0.52} />
              <PhoneKnob label="CLOUD" shown="34" value={0.34} />
            </ControlRow>
          </PhonePanel>
        </PhoneScreen>
        <Notch />
        <SideButtonOutline />
        <CameraDot />
      </Phone>
    </Canvas>
  );
}
